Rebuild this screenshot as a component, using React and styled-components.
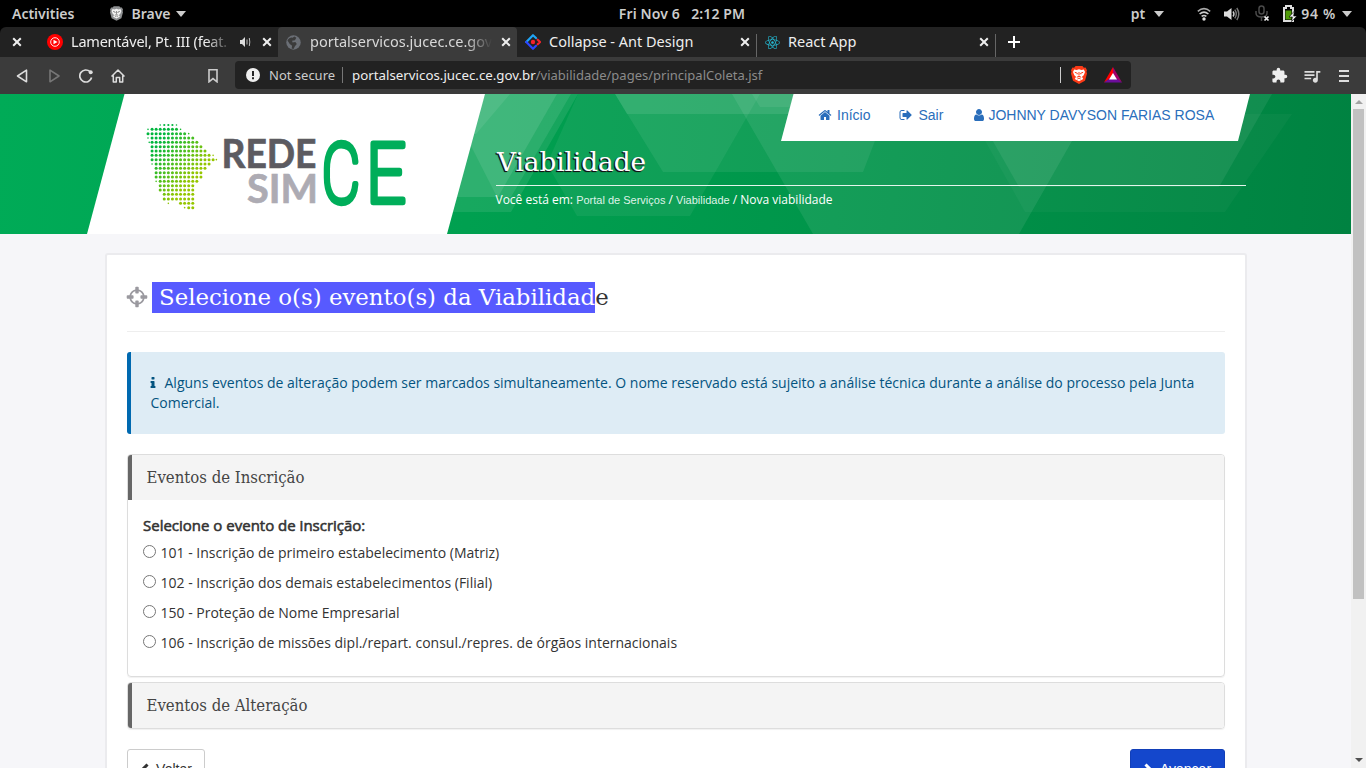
import React from "react";
import styled, { createGlobalStyle } from "styled-components";
import { FaReact } from "react-icons/fa";
import { MdExtension, MdQueueMusic } from "react-icons/md";

const Global = createGlobalStyle`
  * { box-sizing: border-box; }
  html, body { margin: 0; padding: 0; height: 100%; overflow: hidden; }
  body { font-family: "Open Sans", "Noto Sans", sans-serif; font-size: 14px; color: #333; background: #000; }
`;

const Screen = styled.div`
  width: 1366px;
  height: 768px;
  display: flex;
  flex-direction: column;
  overflow: hidden;
  background: #000;
`;

/* ---------- desktop bar ---------- */
const DesktopBar = styled.header`
  height: 27px;
  flex: none;
  display: grid;
  grid-template-columns: 1fr auto 1fr;
  align-items: center;
  padding: 0 14px 0 12px;
  font: 600 14px/27px "Noto Sans", sans-serif;
  color: #ccc;
  white-space: pre;
`;
const BarGroup = styled.div`
  display: flex;
  align-items: center;
  justify-content: ${(p) => (p.$end ? "flex-end" : "flex-start")};
`;
const BarText = styled.span`
  margin-left: ${(p) => p.$gap || 0}px;
  letter-spacing: ${(p) => p.$track || 0}px;
`;
const Caret = styled.i`
  margin-left: ${(p) => p.$gap}px;
  border: 5.5px solid transparent;
  border-top: 6px solid #ccc;
  border-bottom: 0;
`;
const Glyph = styled.svg`
  display: block;
  flex: none;
  margin-left: ${(p) => p.$gap || 0}px;
`;

/* ---------- browser tabs ---------- */
const TabStrip = styled.div`
  height: 30px;
  flex: none;
  display: flex;
  background: #222;
  border-radius: 6px 6px 0 0;
`;
const PinnedClose = styled.div`
  width: 39px;
  display: flex;
  align-items: center;
  padding-left: 12px;
`;
const Tab = styled.div`
  width: ${(p) => p.$w}px;
  display: flex;
  align-items: center;
  padding: 0 6px 0 8px;
  border-radius: 4px 4px 0 0;
  background: ${(p) => (p.$active ? "#3b3b3b" : "transparent")};
  color: ${(p) => (p.$active ? "#d8d8d8" : "#eee")};
  font: 14.5px/28px "Noto Sans", sans-serif;
`;
const TabTitle = styled.span`
  flex: 1;
  min-width: 0;
  height: 30px;
  margin-left: ${(p) => p.$gap || 8}px;
  overflow: hidden;
  white-space: nowrap;
  letter-spacing: ${(p) => p.$track || 0}px;
  ${(p) => p.$fade && "mask-image: linear-gradient(90deg, #000 calc(100% - 26px), transparent 100%);"}
`;
const Divider = styled.i`
  width: 1px;
  height: 23px;
  align-self: flex-end;
  background: #666;
`;

/* ---------- address bar ---------- */
const Toolbar = styled.div`
  height: 37px;
  flex: none;
  display: flex;
  align-items: center;
  background: #3b3b3b;
  padding-left: 14px;
`;
const AddressBox = styled.div`
  width: 896px;
  height: 28px;
  margin: 0 0 1px 17px;
  padding: 0 9px 0 10px;
  display: flex;
  align-items: center;
  border-radius: 4px;
  background: #222;
  font: 13px/28px "Noto Sans", sans-serif;
  color: #eee;
`;
const Secure = styled.span`
  margin: 0 7px 0 9px;
  color: #ccc;
`;
const Rule = styled.i`
  width: 1px;
  height: 16px;
  background: ${(p) => p.$color || "#777"};
`;
const Host = styled.span`
  margin-left: 9px;
  font-size: 13.3px;
`;
const PathText = styled.span`
  flex: 1;
  color: #8b8b8b;
`;

/* ---------- page ---------- */
const Viewport = styled.div`
  flex: 1;
  min-height: 0;
  display: flex;
`;
const Page = styled.div`
  width: 1351px;
  overflow: hidden;
  background: #f6f6f9;
`;
const ScrollTrack = styled.div`
  width: 15px;
  background: #f1f1f1;
  display: flex;
  flex-direction: column;
  align-items: center;
`;
const ScrollArrow = styled.i`
  margin: ${(p) => (p.$down ? "auto 0 6px" : "6px 0 5px")};
  border: 4px solid transparent;
  ${(p) => (p.$down ? "border-top-color: #505050; border-bottom: 0;" : "border-bottom-color: #a3a3a3; border-top: 0;")}
`;
const ScrollThumb = styled.div`
  width: 11px;
  height: 490px;
  background: #c1c1c1;
`;

const Banner = styled.div`
  position: relative;
  height: 140px;
  display: flex;
  padding-left: 87px;
  background: linear-gradient(95deg, #00ab57 0%, #00a050 35%, #00954a 62%, #008241 100%);
`;
const Facets = styled.svg`
  position: absolute;
  inset: 0;
`;
const LogoPanel = styled.div`
  position: relative;
  width: 398px;
  height: 140px;
  background: #fff;
  clip-path: polygon(37.5px 0, 398px 0, 360px 100%, 0 100%);
`;
const BannerBody = styled.div`
  position: relative;
  width: 750px;
  margin-left: 11px;
  color: #fff;
`;
const UserNav = styled.nav`
  width: 469px;
  height: 47px;
  margin: 0 -4px 0 285px;
  padding: 0 0 5px 37px;
  display: flex;
  align-items: center;
  background: #fff;
  clip-path: polygon(12.5px 0, 100% 0, 457px 100%, 0 100%);
  color: #2a6ebb;
  font: 14px/42px "Liberation Sans", sans-serif;
  white-space: nowrap;
`;
const NavLink = styled.a`
  display: flex;
  align-items: center;
  gap: ${(p) => p.$gap || 4}px;
  margin-right: 29px;
`;
const PageTitle = styled.h1`
  height: 45px;
  margin: 0;
  border-bottom: 1px solid #e4f5ec;
  padding-left: 1px;
  font: 400 26.2px/42px "DejaVu Serif", serif;
  text-shadow: -1px 1px 1px #111, -1px 1px 0 #222;
`;
const Crumbs = styled.div`
  margin: 4px 0 0 -0.5px;
  font-size: 12px;
  line-height: 20px;
`;
const CrumbLink = styled.a`
  font: 11px "Liberation Sans", sans-serif;
  color: #dff3e8;
`;

const Card = styled.main`
  width: 1142px;
  height: 700px;
  margin: 19px 0 0 105px;
  padding: 20px;
  border: 2px solid #ebebee;
  border-radius: 3px;
  background: #fff;
`;
const Heading = styled.h2`
  display: flex;
  align-items: center;
  height: 57px;
  margin: 0 0 20px;
  padding-bottom: 12px;
  border-bottom: 1px solid #eee;
  font: 400 22.85px/31px "DejaVu Serif", serif;
  color: #333;
  white-space: pre;
`;
const Crosshair = styled.span`
  margin-left: -2px;
`;
const Selected = styled.span`
  margin-left: 3px;
  padding-left: 7px;
  background: #575aff;
  color: #fff;
`;
const Notice = styled.div`
  height: 82px;
  margin-bottom: 20px;
  padding: 21px 20px 20px 19.5px;
  border-left: 4px solid #0069b0;
  border-radius: 3px;
  background: #deecf5;
  color: #045480;
  line-height: 20px;
`;
const InfoMark = styled.svg`
  width: 14px;
  height: 14px;
  margin: 0 4.5px 0 -4.5px;
  vertical-align: -2px;
`;
const Panel = styled.section`
  margin-bottom: 5px;
  border: 1px solid #ddd;
  border-radius: 4px;
  box-shadow: 0 1px 1px rgba(0, 0, 0, 0.06);
  overflow: hidden;
`;
const PanelTitle = styled.h3`
  height: 45px;
  margin: 0;
  padding-left: 14.5px;
  border-left: 4px solid #666;
  background: #f4f4f4;
  font: 400 16.6px/46px "DejaVu Serif Condensed", "DejaVu Serif", serif;
  color: #444;
`;
const PanelBody = styled.div`
  height: 176px;
  padding: 16px 15px 0;
`;
const Legend = styled.div`
  height: 21px;
  font-size: 15px;
  line-height: 19px;
  -webkit-text-stroke: 0.55px #333;
`;
const Option = styled.label`
  display: flex;
  align-items: center;
  height: 30px;
  line-height: 30px;
  padding-top: 1px;
`;
const Radio = styled.input`
  width: 13px;
  height: 13px;
  margin: 0 4.5px 3px 0;
`;
const Actions = styled.div`
  display: flex;
  justify-content: space-between;
  margin-top: 20px;
`;
const Button = styled.button`
  width: ${(p) => (p.$primary ? 95 : 78)}px;
  height: 40px;
  padding: 0;
  display: flex;
  align-items: center;
  justify-content: center;
  gap: 7px;
  border: 1px solid ${(p) => (p.$primary ? "#123fb8" : "#ccc")};
  border-radius: 3px;
  background: ${(p) => (p.$primary ? "#1447cc" : "#fff")};
  color: ${(p) => (p.$primary ? "#fff" : "#333")};
  font: 14px "Liberation Sans", sans-serif;
`;

const PATHS = {
  home: "M1472 992v480q0 26-19 45t-45 19h-384v-384h-256v384h-384q-26 0-45-19t-19-45v-480q0-1 .5-3t.5-3l575-474 575 474q1 2 1 6zm223-69l-62 74q-8 9-21 11h-3q-13 0-21-7l-692-577-692 577q-12 8-24 7-13-2-21-11l-62-74q-8-10-7-23.5t11-21.5l719-599q32-26 76-26t76 26l244 204v-195q0-14 9-23t23-9h192q14 0 23 9t9 23v408l219 182q10 8 11 21.5t-7 23.5z",
  exit: "M704 1440q0 4 1 20t.5 26.5-3 23.5-10 19.5-20.5 6.5h-320q-119 0-203.5-84.5t-84.5-203.5v-704q0-119 84.5-203.5t203.5-84.5h320q13 0 22.5 9.5t9.5 22.5q0 4 1 20t.5 26.5-3 23.5-10 19.5-20.5 6.5h-320q-66 0-113 47t-47 113v704q0 66 47 113t113 47h312l11.5 1 11.5 3 8 5.5 7 9 2 13.5zm928-544q0 26-19 45l-544 544q-19 19-45 19t-45-19-19-45v-288h-448q-26 0-45-19t-19-45v-384q0-26 19-45t45-19h448v-288q0-26 19-45t45-19 45 19l544 544q19 19 19 45z",
  user: "M1536 1399q0 109-62.5 187t-150.5 78h-854q-88 0-150.5-78t-62.5-187q0-85 8.5-160.5t31.5-152 58.5-131 94-89 134.5-34.5q131 128 313 128t313-128q76 0 134.5 34.5t94 89 58.5 131 31.5 152 8.5 160.5zm-256-887q0 159-112.5 271.5t-271.5 112.5-271.5-112.5-112.5-271.5 112.5-271.5 271.5-112.5 271.5 112.5 112.5 271.5z",
  info: "M1216 1344v128q0 26-19 45t-45 19h-512q-26 0-45-19t-19-45v-128q0-26 19-45t45-19h64v-384h-64q-26 0-45-19t-19-45v-128q0-26 19-45t45-19h384q26 0 45 19t19 45v576h64q26 0 45 19t19 45zm-128-1152v192q0 26-19 45t-45 19h-256q-26 0-45-19t-19-45v-192q0-26 19-45t45-19h256q26 0 45 19t19 45z",
  target: "M1325 1024h-109q-26 0-45-19t-19-45v-128q0-26 19-45t45-19h109q-32-108-112.5-188.5t-188.5-112.5v109q0 26-19 45t-45 19h-128q-26 0-45-19t-19-45v-109q-108 32-188.5 112.5t-112.5 188.5h109q26 0 45 19t19 45v128q0 26-19 45t-45 19h-109q32 108 112.5 188.5t188.5 112.5v-109q0-26 19-45t45-19h128q26 0 45 19t19 45v109q108-32 188.5-112.5t112.5-188.5zm339-192v128q0 26-19 45t-45 19h-143q-37 161-154.5 278.5t-278.5 154.5v143q0 26-19 45t-45 19h-128q-26 0-45-19t-19-45v-143q-161-37-278.5-154.5t-154.5-278.5h-143q-26 0-45-19t-19-45v-128q0-26 19-45t45-19h143q37-161 154.5-278.5t278.5-154.5v-143q0-26 19-45t45-19h128q26 0 45 19t19 45v143q161 37 278.5 154.5t154.5 278.5h143q26 0 45 19t19 45z",
};
const Awesome = ({ name, size = 14, color = "currentColor" }) => (
  <Glyph width={size} height={size} viewBox="0 0 1792 1792" fill={color}>
    <path d={PATHS[name]} />
  </Glyph>
);

const CloseIcon = ({ gap }) => (
  <Glyph $gap={gap} width="10" height="10" viewBox="0 0 10 10" stroke="#eee" strokeWidth="2">
    <path d="M1.2 1.2l7.6 7.6M8.8 1.2L1.2 8.8" />
  </Glyph>
);

const Lion = ({ shield, face, ink, width, height, gap }) => (
  <Glyph $gap={gap} width={width} height={height} viewBox="0 0 16 18">
    <path d="M4.6 0h6.8l1.5 1.7 1.7-.2L16 4.2l-.5 1.6.5 1.6-2 7.4L8 18l-6-3.2L0 7.400l.5-1.600L0 4.200l1.400-2.700 1.700.2z" fill={shield} />
    <path d="M3.200 3.500l2.300.5L8 3.300l2.500.7 2.300-.5 1.200 2.500-1.300 3.300-1.700 1.500 1.200 2.200L8 15.200l-4.200-2.200L5 10.800 3.300 9.300 2 6z" fill={face} />
    <path d="M3.800 6.300l2.600 1-.2 1M12.200 6.300l-2.600 1 .2 1M8 6v3.500M5.800 11.300L8 10.200l2.200 1.100M6.400 13L8 12l1.600 1" fill="none" stroke={ink} strokeWidth="1" />
  </Glyph>
);

/* [row y, first column, last column] of the dotted map */
const MAP_ROWS = [
  [30, 4, 6], [43, 1, 7], [56, 0, 9], [69, 1, 11], [82, 1, 12], [95, 1, 13], [108, 1, 14],
  [121, 1, 15], [134, 1, 16], [147, 2, 15], [160, 2, 14], [173, 2, 13], [186, 2, 13],
  [199, 3, 12], [212, 3, 11], [225, 3, 11], [238, 4, 11], [252, 4, 11], [265, 8, 11], [278, 10, 11],
];
const MAP_FAINT = [[30, 3], [30, 7], [43, 0], [43, 8], [56, 10], [69, 0], [82, 0.3], [121, 16], [134, 16.8], [147, 1], [199, 2], [265, 5], [278, 9]];
const dotColor = (y, k) => {
  const t = Math.min(1, Math.max(0, (y - 60) / 230 + (k - 4) / 16));
  return `rgb(${Math.round(150 * t)}, ${Math.round(182 + 16 * t)}, ${Math.round(62 * (1 - t))})`;
};
const Dot = ({ y, k, r }) => <circle cx={61 + k * 4.07} cy={21 + y / 3} r={r} fill={dotColor(y, k)} />;

const Logo = () => (
  <LogoPanel>
    <svg width="398" height="140">
      {MAP_ROWS.flatMap(([y, a, b]) =>
        Array.from({ length: b - a + 1 }, (_, i) => <Dot key={`${y}-${i}`} y={y} k={a + i} r={y === 30 ? 1.1 : 1.5} />)
      )}
      {MAP_FAINT.map(([y, k]) => <Dot key={`f${y}-${k}`} y={y} k={k} r={0.8} />)}
      <g fontFamily="Lato, sans-serif" fontWeight="700" strokeWidth=".7">
        <text x="134.500" y="74" fontSize="40.500" fill="#5c5b61" stroke="#5c5b61" textLength="95" lengthAdjust="spacingAndGlyphs">REDE</text>
        <text x="160" y="109" fontSize="40.500" fill="#adabb3" stroke="#adabb3" textLength="71" lengthAdjust="spacingAndGlyphs">SIM</text>
      </g>
      <g fontFamily="Roboto, sans-serif" fontWeight="100" fontSize="81" fill="#00ae5a" stroke="#00ae5a" strokeWidth="6.500" strokeLinejoin="round">
        <text x="235" y="108.300" textLength="38" lengthAdjust="spacingAndGlyphs">C</text>
        <text x="279.500" y="108.300" textLength="39" lengthAdjust="spacingAndGlyphs">E</text>
      </g>
    </svg>
  </LogoPanel>
);

export default function App() {
  return (
    <Screen>
      <Global />
      <DesktopBar>
        <BarGroup>
          <BarText>Activities</BarText>
          <Lion gap={36} width={13} height={15} shield="#8d8f91" face="#f2f2f2" ink="#777" />
          <BarText $gap={8}>Brave</BarText>
          <Caret $gap={5} />
        </BarGroup>
        <BarText $track={0.12}>Fri Nov 6   2:12 PM</BarText>
        <BarGroup $end>
          <BarText>pt</BarText>
          <Caret $gap={9} />
          <Glyph $gap={33} width="14" height="14" viewBox="0 0 14 14" fill="none" stroke="#ccc" strokeWidth="1.600">
            <path d="M.8 4.300Q7-1 13.200 4.300" stroke="#aaa" />
            <path d="M2.600 7Q7 3.200 11.400 7M4.600 9.400Q7 7.500 9.400 9.400" />
            <circle cx="7" cy="12" r="1.700" fill="#ddd" stroke="none" />
          </Glyph>
          <Glyph $gap={13} width="16" height="14" viewBox="0 0 16 14" fill="none" strokeWidth="1.400">
            <path d="M0 4.500h3L7.500 1v12L3 9.500H0z" fill="#ddd" />
            <path d="M9 4.500q2 2.500 0 5" stroke="#ccc" />
            <path d="M10.800 2.700q3 4.300 0 8.600M12.800 1q4 6 0 12" stroke="#777" />
          </Glyph>
          <Glyph $gap={15} width="15" height="17" viewBox="0 0 15 17" fill="none" stroke="#4a4a4a" strokeWidth="1.500">
            <rect x="4" y="1" width="5" height="8" rx="2.500" />
            <path d="M1 6v2q0 4 5.500 4T12 8V6M6.500 12v4" />
            <path d="M9.500 11.500l4 4M13.500 11.500l-4 4" stroke="#eee" strokeWidth="1.700" />
          </Glyph>
          <Glyph $gap={12} width="15" height="17" viewBox="0 0 15 17">
            <path d="M2 3h2V1h5v2h2v13H2z" fill="none" stroke="#ddd" strokeWidth="2" />
            <path d="M3.500 5.500h6v9h-6z" fill="#4e9a06" />
            <path d="M12.500 6L7 12h3.500l-1 4.500L15 11h-3.500z" fill="#eee" stroke="#000" strokeWidth=".6" />
          </Glyph>
          <BarText $gap={4} $track={0.7}>94 %</BarText>
          <Caret $gap={6} />
        </BarGroup>
      </DesktopBar>

      <TabStrip>
        <PinnedClose><CloseIcon /></PinnedClose>
        <Tab $w={239}>
          <Glyph width="16" height="16" viewBox="0 0 16 16">
            <circle cx="8" cy="8" r="8" fill="#f00" />
            <circle cx="8" cy="8" r="4.300" fill="none" stroke="#fff" strokeWidth=".9" />
            <path d="M6.500 5.700L10.500 8l-4 2.300z" fill="#fff" />
          </Glyph>
          <TabTitle $fade $track={-0.22}>Lamentável, Pt. III (feat. Dj)</TabTitle>
          <Glyph $gap={8} width="11" height="10" viewBox="0 0 11 10" fill="none" stroke="#bbb">
            <path d="M0 3h2l3-3v10L2 7H0z" fill="#ddd" stroke="none" />
            <path d="M7 2.500v5M9.300 1q1 4 0 8" />
          </Glyph>
          <CloseIcon gap={11} />
        </Tab>
        <Tab $w={239} $active>
          <Glyph width="15" height="15" viewBox="0 0 16 16">
            <circle cx="8" cy="8" r="7.700" fill="#6b6f76" />
            <path d="M1.500 5.500Q4 2 7 3l2-1.500 2 1.500-1.500 2.500-3 .5.5 2 3-.5 1.500 2-2 2.500-1.500 3-2-.5.5-3L4 9.500z" fill="#3b3b3b" />
          </Glyph>
          <TabTitle $fade $gap={9}>portalservicos.jucec.ce.gov.br</TabTitle>
          <CloseIcon gap={9} />
        </Tab>
        <Tab $w={239}>
          <Glyph width="16" height="16" viewBox="0 0 16 16" fill="none" strokeWidth="2.200" strokeLinejoin="round" strokeLinecap="round">
            <path d="M11 4L8 1.200 1.300 8" stroke="#1fa4f5" />
            <path d="M1.300 8L8 14.800l3-3" stroke="#2c46ff" />
            <path d="M12.700 5.700L15 8l-2.300 2.300" stroke="#f5222d" />
            <circle cx="8" cy="8" r="2.200" fill="#f5222d" />
          </Glyph>
          <TabTitle>Collapse - Ant Design</TabTitle>
          <CloseIcon />
        </Tab>
        <Divider />
        <Tab $w={238}>
          <FaReact size={15} color="#24b6cf" />
          <TabTitle>React App</TabTitle>
          <CloseIcon />
        </Tab>
        <Divider />
        <Tab $w={40}>
          <Glyph $gap={4} width="12" height="12" stroke="#fff" strokeWidth="2"><path d="M6 0v12M0 6h12" /></Glyph>
        </Tab>
      </TabStrip>

      <Toolbar>
        <Glyph $gap={2} width="13" height="14" viewBox="0 0 13 14" fill="none" stroke="#ddd" strokeWidth="1.600" strokeLinejoin="round"><path d="M10.500 1.200v11.600L1.500 7z" /></Glyph>
        <Glyph $gap={20} width="13" height="14" viewBox="0 0 13 14" fill="none" stroke="#777" strokeWidth="1.600" strokeLinejoin="round"><path d="M1 1.200v11.600L10 7z" /></Glyph>
        <Glyph $gap={17} width="14" height="14" viewBox="0 0 14 14" fill="none" stroke="#ddd" strokeWidth="1.700"><path d="M12.600 8.500A6 6 0 1 1 11 2.700" /><circle cx="11.700" cy="3.200" r="2" fill="#ddd" stroke="none" /></Glyph>
        <Glyph $gap={18} width="14" height="14" viewBox="0 0 14 14" fill="none" stroke="#ddd" strokeWidth="1.500" strokeLinejoin="round"><path d="M.5 7.500L7 1l6.500 6.500M2.300 6.500V13h3V8.500h3.400V13h3V6.500" /></Glyph>
        <Glyph $gap={83} width="10" height="14" viewBox="0 0 10 14" fill="none" stroke="#ccc" strokeWidth="1.600"><path d="M1 .8h8v12L5 9.600 1 12.800z" /></Glyph>
        <AddressBox>
          <Glyph $gap={1} width="14" height="14"><circle cx="7" cy="7" r="7" fill="#eee" /><path d="M6 3h2v5H6zM6 9.300h2v2H6z" fill="#222" /></Glyph>
          <Secure>Not secure</Secure>
          <Rule />
          <Host>portalservicos.jucec.ce.gov.br</Host>
          <PathText>/viabilidade/pages/principalColeta.jsf</PathText>
          <Rule $color="#ccc" />
          <Lion gap={10} width={16} height={18} shield="#fb3a17" face="#fff" ink="#fb3a17" />
          <Glyph $gap={17} width="18" height="16" viewBox="0 0 18 16">
            <path d="M9 0L0 15.500 9 10z" fill="#f00" />
            <path d="M9 0l9 15.500L9 10z" fill="#a3006b" />
            <path d="M0 15.500h18L9 9z" fill="#6d0d9b" />
            <path d="M9 6l4 6.500H5z" fill="#fff" />
          </Glyph>
        </AddressBox>
        <Glyph as={MdExtension} $gap={140} size={17} color="#eee" />
        <Glyph as={MdQueueMusic} $gap={14} size={20} color="#ddd" />
        <Glyph $gap={17} width="10" height="12" stroke="#ddd" strokeWidth="2"><path d="M0 1h10M0 6h10M0 11h10" /></Glyph>
      </Toolbar>

      <Viewport>
        <Page>
          <Banner>
            <Facets width="1351" height="140" fill="#fff">
              <path d="M400 0H578L511 118H400z" fillOpacity=".09" />
              <path d="M400 0H557L498 103H400z" fillOpacity=".1" />
              <path d="M485 0H510L476 40H465z" fillOpacity=".08" />
              <path d="M485 0H571L511 103H497L470 50z" fillOpacity=".09" />
              <path d="M615 0H893L863 78H663z" fillOpacity=".07" />
              <path d="M615 0H800V20H627z" fillOpacity=".09" />
              <path d="M578 0H760L690 122H577L547 70z" fillOpacity=".06" />
              <path d="M732 0H1153L1072 47 1019 140H813z" fillOpacity=".08" />
              <path d="M752 0H800V13H760z" fillOpacity=".07" />
              <path d="M970 20H1292L1225 118H1025z" fillOpacity=".03" />
              <path d="M966 0H1272L1219 93H1019z" fillOpacity=".07" />
            </Facets>
            <Logo />
            <BannerBody>
              <UserNav>
                <NavLink $gap={5}><Awesome name="home" />Início</NavLink>
                <NavLink $gap={5}><Awesome name="exit" />Sair</NavLink>
                <NavLink $gap={2}><Awesome name="user" />JOHNNY DAVYSON FARIAS ROSA</NavLink>
              </UserNav>
              <PageTitle>Viabilidade</PageTitle>
              <Crumbs>
                Você está em: <CrumbLink>Portal de Serviços</CrumbLink> / <CrumbLink>Viabilidade</CrumbLink> / Nova viabilidade
              </Crumbs>
            </BannerBody>
          </Banner>

          <Card>
            <Heading>
              <Crosshair><Awesome name="target" size={24} color="#9a999f" /></Crosshair>
              <Selected>Selecione o(s) evento(s) da Viabilidad</Selected>e
            </Heading>
            <Notice>
              <InfoMark viewBox="0 0 1792 1792" fill="currentColor"><path d={PATHS.info} /></InfoMark>
              Alguns eventos de alteração podem ser marcados simultaneamente. O nome reservado está sujeito a análise técnica durante a análise do processo pela Junta Comercial.
            </Notice>
            <Panel>
              <PanelTitle>Eventos de Inscrição</PanelTitle>
              <PanelBody>
                <Legend>Selecione o evento de inscrição:</Legend>
                <Option><Radio type="radio" name="evento" />101 - Inscrição de primeiro estabelecimento (Matriz)</Option>
                <Option><Radio type="radio" name="evento" />102 - Inscrição dos demais estabelecimentos (Filial)</Option>
                <Option><Radio type="radio" name="evento" />150 - Proteção de Nome Empresarial</Option>
                <Option><Radio type="radio" name="evento" />106 - Inscrição de missões dipl./repart. consul./repres. de órgãos internacionais</Option>
              </PanelBody>
            </Panel>
            <Panel>
              <PanelTitle>Eventos de Alteração</PanelTitle>
            </Panel>
            <Actions>
              <Button>
                <Glyph width="9" height="13" viewBox="0 0 9 13" fill="none" stroke="#333" strokeWidth="3"><path d="M7.500 1.500l-5 5 5 5" /></Glyph>
                Voltar
              </Button>
              <Button $primary>
                <Glyph width="9" height="13" viewBox="0 0 9 13" fill="none" stroke="#fff" strokeWidth="3"><path d="M1.500 1.500l5 5-5 5" /></Glyph>
                Avançar
              </Button>
            </Actions>
          </Card>
        </Page>
        <ScrollTrack>
          <ScrollArrow />
          <ScrollThumb />
          <ScrollArrow $down />
        </ScrollTrack>
      </Viewport>
    </Screen>
  );
}
